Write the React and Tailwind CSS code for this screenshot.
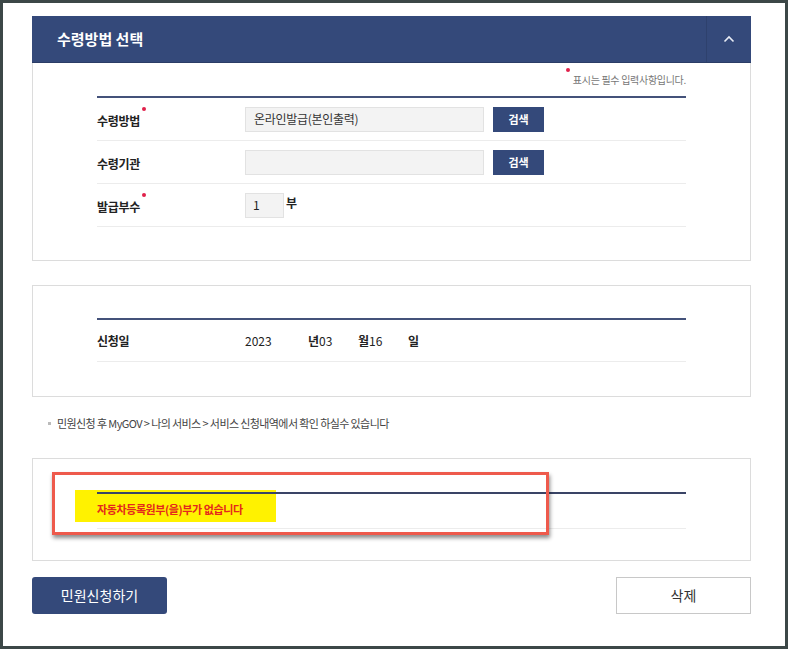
import React from 'react'

const font = { fontFamily: '"Noto Sans CJK KR", "Noto Sans", sans-serif' }

function Req() {
  return <span className="absolute -top-[5px] -right-[6px] w-[4px] h-[4px] rounded-full bg-[#e0204a]" />
}

function Label({ children, req }) {
  return (
    <div className="w-[148px] shrink-0">
      <span className="relative text-[12px] font-bold text-[#222] tracking-[-0.3px]">
        {children}
        {req && <Req />}
      </span>
    </div>
  )
}

function SearchBtn() {
  return (
    <button className="ml-[9px] w-[51px] h-[25px] bg-[#34497a] text-white text-[11px] font-bold">
      검색
    </button>
  )
}

export default function App() {
  return (
    <div style={font} className="w-[788px] h-[649px] bg-[#3c4747] p-[3px]">
      <div className="h-[643px] w-[782px] bg-white pl-[29px] pr-[34px] pt-[13px]">
        {/* header */}
        <div className="h-[47px] bg-[#34497a] flex items-center justify-between border-b border-[#2b3d66]">
          <span className="pl-[25px] text-white text-[15px] font-bold">수령방법 선택</span>
          <div className="h-full w-[45px] border-l border-[#2e416d] flex items-center justify-center">
            <svg width="12" height="8" viewBox="0 0 12 8">
              <path d="M1.5 6.5 L6 2 L10.5 6.5" stroke="#e8ecf5" strokeWidth="1.6" fill="none" />
            </svg>
          </div>
        </div>

        {/* panel 1 */}
        <div className="border border-t-0 border-[#dcdcdc] px-[64px] pb-[33px]">
          <div className="h-[33px] flex items-center justify-end text-[10px] text-[#777] tracking-[-0.3px]">
            <span className="relative">
              <span className="absolute -top-[4px] -left-[7px] w-[4px] h-[4px] rounded-full bg-[#e0204a]" />
              표시는 필수 입력사항입니다.
            </span>
          </div>
          <div className="border-t-2 border-[#44527a]">
            <div className="h-[43px] flex items-center border-b border-[#ececec]">
              <Label req>수령방법</Label>
              <div className="w-[239px] h-[25px] bg-[#f3f3f3] border border-[#e2e2e2] flex items-center px-[8px] text-[12px] text-[#333] tracking-[-0.3px]">
                온라인발급(본인출력)
              </div>
              <SearchBtn />
            </div>
            <div className="h-[43px] flex items-center border-b border-[#ececec]">
              <Label>수령기관</Label>
              <div className="w-[239px] h-[25px] bg-[#f3f3f3] border border-[#e2e2e2]" />
              <SearchBtn />
            </div>
            <div className="h-[43px] flex items-center border-b border-[#ececec]">
              <Label req>발급부수</Label>
              <div className="w-[39px] h-[25px] bg-[#f3f3f3] border border-[#e2e2e2] flex items-center px-[7px] text-[12px] text-[#222]">
                1
              </div>
              <span className="ml-[2px] -mt-[4px] text-[12px] font-bold text-[#222]">부</span>
            </div>
          </div>
        </div>

        {/* panel 2 */}
        <div className="mt-[24px] border border-[#dcdcdc] px-[64px] pt-[32px] pb-[34px]">
          <div className="border-t-2 border-[#44527a]">
            <div className="h-[42px] flex items-center border-b border-[#ececec] text-[12px] text-[#222]">
              <Label>신청일</Label>
              <span className="w-[63px]">2023</span>
              <span className="w-[50px]">
                <b>년</b>03
              </span>
              <span className="w-[50px]">
                <b>월</b>16
              </span>
              <b>일</b>
            </div>
          </div>
        </div>

        {/* note */}
        <div className="h-[61px] pb-[8px] flex items-center pl-[16px] text-[11px] text-[#444] tracking-[-0.6px]">
          <span className="w-[3px] h-[3px] bg-[#bbb] mr-[6px]" />
          민원신청 후 MyGOV &gt; 나의 서비스 &gt; 서비스 신청내역에서 확인 하실수 있습니다
        </div>

        {/* panel 3 */}
        <div className="relative border border-[#dcdcdc] px-[64px] pt-[33px] pb-[31px]">
          {/* highlight (under the table line) */}
          <div className="absolute left-[42px] top-[31px] w-[201px] h-[32px] bg-[#fff200] flex items-center pl-[22px] pt-[6px] text-[11px] font-bold text-[#e4281c] tracking-[-0.4px]">
            자동차등록원부(을)부가 없습니다
          </div>
          <div className="relative border-t-2 border-[#3a4466]">
            <div className="h-[35px] border-b border-[#ececec]" />
          </div>
          {/* annotation box */}
          <div className="absolute left-[19px] top-[13px] w-[497px] h-[63px] border-[3px] border-[#ee5a4c] shadow-[1px_3px_4px_rgba(0,0,0,0.45)]" />
        </div>

        {/* buttons */}
        <div className="mt-[16px] flex justify-between">
          <button className="w-[135px] h-[37px] rounded-[3px] bg-[#34497a] text-white text-[14px]">
            민원신청하기
          </button>
          <button className="w-[135px] h-[37px] border border-[#c8c8c8] bg-white text-[#333] text-[14px]">
            삭제
          </button>
        </div>
      </div>
    </div>
  )
}
